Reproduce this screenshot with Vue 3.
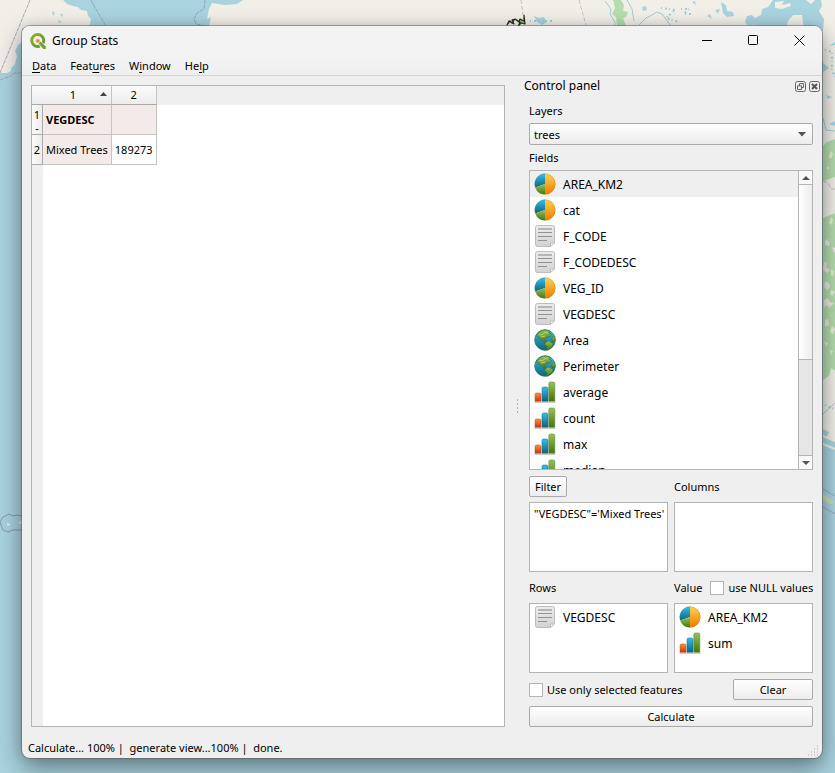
<script setup>
import { ref } from 'vue'

const menus = [
  ['', 'D', 'ata'],
  ['Feat', 'u', 'res'],
  ['W', 'i', 'ndow'],
  ['He', 'l', 'p'],
]

const fields = [
  { name: 'AREA_KM2', icon: 'pie' },
  { name: 'cat', icon: 'pie' },
  { name: 'F_CODE', icon: 'page' },
  { name: 'F_CODEDESC', icon: 'page' },
  { name: 'VEG_ID', icon: 'pie' },
  { name: 'VEGDESC', icon: 'page' },
  { name: 'Area', icon: 'globe' },
  { name: 'Perimeter', icon: 'globe' },
  { name: 'average', icon: 'bars' },
  { name: 'count', icon: 'bars' },
  { name: 'max', icon: 'bars' },
  { name: 'median', icon: 'bars' },
]
const rows = [{ name: 'VEGDESC', icon: 'page' }]
const values = [
  { name: 'AREA_KM2', icon: 'pie' },
  { name: 'sum', icon: 'bars' },
]

const current = ref(0)
const layer = ref('trees')
const filter = ref('"VEGDESC"=\'Mixed Trees\'')
const useNull = ref(false)
const onlySelected = ref(false)
</script>

<template>
  <div class="desktop">
    <svg class="map" viewBox="0 0 835 773" preserveAspectRatio="none" aria-hidden="true">
      <rect width="835" height="773" fill="#a9d3df" />
      <path fill="#f2efe9" d="M0 0H51l4 4 -2 8 3 5-1 7 4 4H22V42l-4 3-3 6 2 5-2 8-4 4 0 3-4 2-7 0Z" />
      <path fill="#f2efe9" d="M50 0H63l4 4 6 2 5 1 3 3 6 1 1 5 3 3-1 5-4 4H50Z" />
      <path fill="#f2efe9" d="M212 3l13 2 12-1 6-4H835V455l-12-8V60H205l4-34 2-9-4 2 2-10Z" />
      <path fill="#a9d3df" d="M773 0l-5 7-6 2-1 6-6 3-3-3-5 1-2 6 3 4 7-1 11 5 4-4 7 4h9l2-9 5-6 9 0 2 14 19 2 1-12-5-8 3-5-1-6h-6l-4 4-5-4Z" />
      <path fill="#f2efe9" d="M775 2l9-1-2 4 8-2 1 3-9 3-7-1Z" />
      <path fill="#a9d3df" d="M721 2l5 3 1 6 6 1 1 4-7 1-4-4ZM715 10l5-1-2 5ZM707 16l3-2 2 5ZM692 2l3-1 1 4ZM642 7l4-1 1 4-4 1ZM534 16l5 2 5-1 3 5-5 3-5-3ZM823 63l6 5-6 4ZM829 46l6-4v3ZM826 95l6 2-4 2ZM829 124l6-3v5Z" />
      <path fill="#b5dcae" d="M613 0h8l3 5-1 6 5 1-2 5-3 1 3 8-9 0-1-9-4-3 3-6Z" />
      <path fill="none" stroke="#9dcddd" stroke-width="1" d="M605 1l6 8-1 5 5 8 0 4M627 0l5 9 2 12M639 25l7-7 6-3 5-3 5 2 6 8 3 4M823 118l3 12 9 1M823 414l12-11" />
      <path fill="none" stroke="#9dcddd" stroke-width="2" stroke-dasharray="1 3 2 2" d="M530 21h24M661 8l14 2-9 8 13 4M681 9h8l-5 5h9M825 50l7 2 0 18 3 7M825 405l9 4" />
      <path fill="#b5dcae" d="M823 146l4-4 8-3v38l-12 4ZM823 218l12-5V371l-4-3-2 8-6 4Z" />
      <path fill="#ece9df" d="M831 151l2 3-2 5-2-2 1-4ZM826 168l3-2 0 4ZM831 217l2 3-1 5-3-2ZM825 241l2-2 3 4-1 3-4-1ZM832 247l3 1v5l-2-2ZM824 262l3 1-1 4 4 3-3 3-4-3ZM831 269l3 2-1 5-2-1ZM825 281l4 2 1 4-3 3-3-3ZM831 290l4 2-3 4-2-2ZM824 300l4-2 2 4 4 1-5 5-2-3-3 2ZM825 320l3-1 1 6-4 2ZM832 326l3 3-2 5-3-2ZM824 341l4 2-2 4ZM830 350l3 1-2 4Z" />
      <path fill="#a9d3df" d="M823 429l6 3-2 5 8 4v20l-12-4Z" />
      <path fill="none" stroke="#f2efe9" stroke-width="2" d="M823 436l12 5M823 444l12 5" />
      <path fill="#c7dfb7" d="M823 494l5 3 7 6-5 1-7-4Z" />
      <path fill="none" stroke="#94a6bd" d="M823 489l12 7M823 507l12 7" />
      <path fill="none" stroke="#b3a3b2" stroke-dasharray="4 1" d="M30 0L0 73M0 80l11-4 3-3 8 0" />
      <path fill="none" stroke="#8fa7bf" stroke-dasharray="4 1" d="M91 0l7 13 8 13M205 0l-1 9-7 4-3 6 2 5 9 2" />
      <path fill="none" stroke="#c6bcc2" stroke-dasharray="4 2" d="M521 0l2 15M579 0l7 25M823 181l5 2 3 6 4 0" />
      <path fill="#a9d3df" d="M52 11l3 2-2 3ZM58 20l4 2-3 1ZM14 68l4-8 4-1v7ZM60 14l3 0-1 3Z" />
      <path fill="#7fc45a" stroke="#292e25" stroke-width="1.2" stroke-linejoin="round" d="M507 25l3-4 2 2 3-4 4 3 1-3 4 2 0-6 1 9-4-1-3 4 2-5-5-3-3 1 2 4-5-3Z" />
      <path fill="none" stroke="#8b95ae" d="M22 516l-5-1-4 1-4-2-6 3-3 5 3 8 5 2 5-2 9 0" />
      <path fill="#f2efe9" d="M7 523l3 1-1 2-2-1ZM18 523l4-2v3Z" />
    </svg>

    <svg class="defs" aria-hidden="true">
      <defs>
        <linearGradient id="orange" x2="0" y2="1"><stop stop-color="#fbd449" /><stop offset="1" stop-color="#f57900" /></linearGradient>
        <linearGradient id="blue" x2="0" y2="1"><stop stop-color="#2fc3f2" /><stop offset="1" stop-color="#14607d" /></linearGradient>
        <linearGradient id="green" x2="0" y2="1"><stop stop-color="#96c35a" /><stop offset="1" stop-color="#44750c" /></linearGradient>
        <linearGradient id="red" x2="0" y2="1"><stop stop-color="#f19a35" /><stop offset="1" stop-color="#cf3210" /></linearGradient>
        <linearGradient id="paper" x2="0" y2="1"><stop stop-color="#ececec" /><stop offset="1" stop-color="#d2d2d2" /></linearGradient>
        <linearGradient id="logo" x2="1" y2="1"><stop stop-color="#93b023" /><stop offset="1" stop-color="#589632" /></linearGradient>
      </defs>
      <symbol id="pie" viewBox="0 0 22 22">
        <path fill="url(#blue)" d="M11 .5V11L1.300 14.500A10.500 10.500 0 0 1 11 .5Z" />
        <path fill="url(#green)" d="M11 11v10.500A10.500 10.500 0 0 1 1.300 14.500Z" />
        <path fill="url(#orange)" d="M11 .5a10.500 10.500 0 0 1 0 21Z" />
        <circle cx="11" cy="11" r="10.300" fill="none" stroke="#7b6b35" stroke-opacity=".35" stroke-width=".7" />
      </symbol>
      <symbol id="page" viewBox="1 1 22 22">
        <path fill="url(#paper)" stroke="#bdbdbd" d="M4.500 1.500h15q2 0 2 2v15l-4 4h-13q-2 0-2-2v-17q0-2 2-2Z" />
        <path fill="#fafafa" stroke="#bdbdbd" d="M17.500 22.500v-3.500h4Z" />
        <path stroke="#b5b5b5" stroke-width="2" d="M5 5h14" />
        <path stroke="#929292" d="M5 8.500h14M5 12.500h14M5 16.500h9" />
      </symbol>
      <symbol id="globe" viewBox="0 0 22 22">
        <circle cx="11" cy="11" r="10.300" fill="url(#blue)" stroke="#31706e" stroke-width=".8" />
        <path fill="url(#green)" stroke="#356b24" stroke-width=".5" d="M2.500 6.500Q5.500 1.500 11 1l5 1-1 2 2.500 1.500-1.500 2.500-2-1 0 1.500-3 1-1 1.500 1.500.5 1 1.500 1.500 .5-1 1-3-1-2-2.500-3-1.500-1-2-1 0Z" />
        <path fill="url(#green)" stroke="#356b24" stroke-width=".5" d="M11.500 13.500l3-1.500 4.500 2.500-1 3.500-3 2-1.500 1.300-1-.3.5-3.500-2-2Z" />
        <path fill="url(#green)" stroke="#356b24" stroke-width=".5" d="M20.800 7.500l-2 .5-1.500 3 1.500 2 2.300-.8Z" />
        <path fill="none" stroke="#b5d57a" stroke-width="1" d="M5 5.500l3 .5 3-2.500 3 .5M7 8l4-1" />
      </symbol>
      <symbol id="bars" viewBox="0 0 22 22">
        <path stroke="#c9c9c9" stroke-width="1.500" d="M.5 21.200h21" />
        <path fill="url(#red)" stroke="#b8421b" stroke-width=".5" d="M1 20.200v-6.700q0-1.500 1.500-1.500h3q1.500 0 1.500 1.500v6.700Z" />
        <path fill="url(#blue)" stroke="#17637e" stroke-width=".5" d="M8 20.200V7.500Q8 6 9.500 6h3Q14 6 14 7.500v12.700Z" />
        <path fill="url(#green)" stroke="#557c28" stroke-width=".5" d="M14.800 20.200V2.500Q14.800 1 16.300 1h3q1.500 0 1.500 1.500v17.700Z" />
      </symbol>
    </svg>

    <main class="window">
      <header class="titlebar">
        <svg class="logo" viewBox="0 0 16 16" aria-hidden="true">
          <circle cx="7.700" cy="7.500" r="6" fill="none" stroke="url(#logo)" stroke-width="3" />
          <path fill="#f3f3f3" d="M8 9.500l2-2 6 5V16h-5Z" />
          <path fill="#6fa52c" d="M8.600 10.500l2-2 5.200 5V16h-2.500Z" />
          <circle cx="7.700" cy="7.700" r="2.300" fill="#f6b26d" />
          <circle cx="8" cy="8" r="1.300" fill="#ef7b42" />
        </svg>
        <h1>Group Stats</h1>
        <div class="controls">
          <button aria-label="Minimize"><svg viewBox="0 0 11 11"><path d="M0 5.500h10" /></svg></button>
          <button aria-label="Maximize"><svg viewBox="0 0 11 11"><rect x=".5" y=".5" width="9" height="9" rx="1" /></svg></button>
          <button aria-label="Close"><svg viewBox="0 0 11 11"><path d="M.5 .5l10 10M10.500 .5l-10 10" /></svg></button>
        </div>
      </header>
      <nav class="menubar">
        <button v-for="m in menus" :key="m.join('')">{{ m[0] }}<u>{{ m[1] }}</u>{{ m[2] }}</button>
      </nav>

      <div class="content">
        <section class="results">
          <table>
            <thead>
              <tr>
                <td class="corner"></td>
                <th class="sorted"><span>1</span><svg viewBox="0 0 7 4" aria-hidden="true"><path d="M0 4L3.500 0 7 4Z" /></svg></th>
                <th>2</th>
              </tr>
            </thead>
            <tbody>
              <tr>
                <th class="index two-line">1<br>-</th>
                <td class="label title">VEGDESC</td>
                <td class="label"></td>
              </tr>
              <tr>
                <th class="index">2</th>
                <td class="label">Mixed Trees</td>
                <td>189273</td>
              </tr>
            </tbody>
          </table>
        </section>

        <div class="splitter"><i></i></div>

        <aside class="dock">
          <header class="dock-title">
            <h2>Control panel</h2>
            <button aria-label="Float"><svg viewBox="0 0 11 11"><rect x=".5" y=".5" width="10" height="10" rx="2" /><path d="M4.500 5V2.500h4v4H7M2.500 4.800h4v3.700h-4Z" /></svg></button>
            <button aria-label="Close panel"><svg viewBox="0 0 11 11"><rect x=".5" y=".5" width="10" height="10" rx="2" /><path class="thick" d="M3 3l5 5M8 3L3 8" /></svg></button>
          </header>
          <div class="panel">
            <label for="layer">Layers</label>
            <div class="combo">
              <select id="layer" v-model="layer"><option>trees</option></select>
              <svg viewBox="0 0 8 5" aria-hidden="true"><path d="M0 0h8L4 4.500Z" /></svg>
            </div>
            <div class="caption">Fields</div>
            <div class="frame fields">
              <ul>
                <li v-for="(f, i) in fields" :key="f.name" :class="{ current: i === current }" @click="current = i">
                  <svg class="icon"><use :href="'#' + f.icon" /></svg><span>{{ f.name }}</span>
                </li>
              </ul>
              <div class="scrollbar">
                <button aria-label="Scroll up"><svg viewBox="0 0 8 4"><path d="M0 4L4 0l4 4Z" /></svg></button>
                <div class="thumb"></div>
                <div class="track"></div>
                <button aria-label="Scroll down"><svg viewBox="0 0 8 4"><path d="M0 0h8L4 4Z" /></svg></button>
              </div>
            </div>

            <div class="pair heads">
              <div><button class="push">Filter</button></div>
              <div class="caption">Columns</div>
            </div>
            <div class="pair">
              <textarea v-model="filter" class="frame box" aria-label="Filter expression" spellcheck="false"></textarea>
              <ul class="frame box"></ul>
            </div>
            <div class="pair captions">
              <div class="caption">Rows</div>
              <div class="value-head">
                <span>Value</span>
                <label><input v-model="useNull" type="checkbox">use NULL values</label>
              </div>
            </div>
            <div class="pair">
              <ul class="frame box">
                <li v-for="r in rows" :key="r.name"><svg class="icon"><use :href="'#' + r.icon" /></svg><span>{{ r.name }}</span></li>
              </ul>
              <ul class="frame box">
                <li v-for="v in values" :key="v.name"><svg class="icon"><use :href="'#' + v.icon" /></svg><span>{{ v.name }}</span></li>
              </ul>
            </div>
            <div class="options">
              <label><input v-model="onlySelected" type="checkbox">Use only selected features</label>
              <button class="push clear">Clear</button>
            </div>
            <button class="push">Calculate</button>
          </div>
        </aside>
      </div>

      <footer class="status">
        <span>Calculate... 100% |&nbsp; generate view...100% |&nbsp; done.</span>
        <svg class="grip" viewBox="0 0 12 12" aria-hidden="true">
          <path d="M9 1h1M6 4h1M9 4h1M3 7h1M6 7h1M9 7h1M0 10h1M3 10h1M6 10h1M9 10h1" />
        </svg>
      </footer>
    </main>
  </div>
</template>

<style>
body { margin: 0; }
</style>

<style scoped>
* { box-sizing: border-box; }
.desktop {
  position: relative;
  display: flex;
  height: 100vh;
  min-height: 600px;
  padding: 26px 13px 15px 22px;
  overflow: hidden;
  font: 12px/16px "Noto Sans", "Liberation Sans", sans-serif;
  color: #000;
}
.map { position: absolute; inset: 0; width: 100%; height: 100%; }
.defs { position: absolute; width: 0; height: 0; }
.window {
  position: relative;
  flex: 1;
  min-width: 0;
  display: flex;
  flex-direction: column;
  background: #efefef;
  border-radius: 8px;
  box-shadow: 0 0 0 1px rgba(90, 90, 90, .5), 0 10px 26px rgba(0, 0, 0, .42), 0 0 12px rgba(0, 0, 0, .12);
}
h1, h2 { margin: 0; font-size: 12px; font-weight: 400; }
ul { margin: 0; padding: 0; list-style: none; }
button, select, textarea { font: inherit; color: inherit; }

.titlebar { display: flex; align-items: center; height: 29px; padding-left: 8px; background: #f3f3f3; border-radius: 8px 8px 0 0; gap: 6px; }
.logo { width: 16px; height: 16px; }
.controls { display: flex; margin-left: auto; }
.controls button { display: flex; justify-content: center; width: 46px; padding: 0; border: 0; background: none; }
.controls svg { width: 11px; height: 11px; fill: none; stroke: #000; }
.menubar { display: flex; gap: 14px; height: 21px; padding: 2px 10px 0; border-bottom: 1px solid #d5d5d5; background: linear-gradient(#f3f3f3, #efefef); font-size: 11px; }
.menubar button { padding: 0; border: 0; background: none; }
.menubar u { text-underline-offset: 2px; }

.content { flex: 1; min-height: 0; display: flex; }
.results {
  flex: 1;
  margin: 9px 0 0 9px;
  border: 1px solid #b4b4b4;
  background: linear-gradient(#efefef, #efefef) 0 0 / 100% 19px no-repeat, linear-gradient(#efefef, #efefef) 0 0 / 11px 100% no-repeat, #fff;
}
table { border-collapse: separate; border-spacing: 0; font-size: 11px; }
td, th { padding: 0 3px; border-right: 1px solid #c4c4c4; border-bottom: 1px solid #c4c4c4; height: 30px; font-weight: 400; white-space: nowrap; }
thead td, thead th { height: 19px; background: linear-gradient(#fbfbfb, #ececec); border-bottom-color: #aaa; }
thead .corner { padding: 0; border-right: 0; }
.sorted svg { float: right; width: 7px; height: 4px; margin-top: 5px; fill: #444; }
.sorted { padding-right: 4px; }
tbody .index { width: 11px; padding: 0; border-right-color: #aaa; border-bottom-color: #aaa; background: linear-gradient(90deg, #fbfbfb, #ececec); }
tbody .two-line { padding-top: 3px; line-height: 13px; }
.label { background: #f5eaea; }
.title { font-weight: 700; }

.splitter { display: flex; align-items: center; justify-content: center; width: 19px; padding: 10px 0 0 5px; }
.splitter i { width: 3px; height: 17px; background: radial-gradient(circle, #b0b0b0 1px, transparent 1px) 0 0 / 3px 4px; }
.dock { flex: 0 0 298px; display: flex; flex-direction: column; }
.dock-title { display: flex; align-items: center; height: 20px; gap: 3px; padding-right: 2px; }
.dock-title h2 { flex: 1; }
.dock-title button { display: flex; padding: 0; border: 0; background: none; }
.dock-title svg { width: 11px; height: 11px; fill: none; stroke: #666; }
.dock-title .thick { stroke-width: 2; stroke: #555; }
.panel { flex: 1; min-height: 0; display: flex; flex-direction: column; padding: 7px 9px 0 5px; font-size: 11px; }
.combo { position: relative; margin: 4px 0 5px; display: flex; }
select { flex: 1; height: 22px; padding: 2px 4px 0; appearance: none; border: 1px solid #aaa; border-radius: 2px; background: linear-gradient(#fff, #ececec); }
.combo svg { position: absolute; right: 7px; top: 9px; width: 8px; height: 5px; fill: #555; pointer-events: none; }
.frame { border: 1px solid #b4b4b4; background: #fff; font-size: 12px; }
.fields { flex: 1; min-height: 0; display: flex; margin: 4px 0 6px; }
.fields ul { flex: 1; overflow: hidden; }
li { display: flex; align-items: center; height: 26px; padding-left: 4px; gap: 7px; }
li span { padding-top: 2px; }
li.current { background: #efefef; }
.icon { width: 22px; height: 22px; flex: none; }
.scrollbar { display: flex; flex-direction: column; width: 14px; border-left: 1px solid #b4b4b4; background: #e6e6e6; }
.scrollbar button { display: flex; align-items: center; justify-content: center; height: 13px; padding: 0; border: 0; background: #f8f8f8; }
.scrollbar svg { width: 8px; height: 4px; fill: #555; }
.thumb { flex: 175; border: solid #b4b4b4; border-width: 1px 0; background: linear-gradient(90deg, #fff, #ededed); }
.track { flex: 95; border-bottom: 1px solid #b4b4b4; }
.pair { display: grid; grid-template-columns: minmax(0, 1fr) minmax(0, 1fr); column-gap: 6px; }
.heads { align-items: center; margin-bottom: 5px; }
.push { height: 21px; padding: 0 5px; border: 1px solid #aaa; border-radius: 2px; background: linear-gradient(#fff, #ececec); }
.box { height: 70px; min-width: 0; width: 100%; }
textarea { resize: none; padding: 3px 0 3px 4px; outline: 0; overflow: hidden; white-space: pre; }
textarea.box { font-size: 11px; }
.captions { align-items: center; height: 31px; }
.value-head { display: flex; gap: 8px; }
label { display: flex; align-items: center; gap: 4px; white-space: nowrap; }
input { appearance: none; flex: none; width: 14px; height: 14px; margin: 0; border: 1px solid #b4b4b4; background: #fff; }
input:checked { background: #666; }
.options { display: flex; align-items: center; justify-content: space-between; margin: 6px 0; }
.clear { width: 80px; }

.status { display: flex; align-items: center; height: 31px; padding: 10px 2px 0 6px; font-size: 11px; }
.grip { width: 12px; height: 12px; margin: 6px 0 0 auto; stroke: #aaa; }
</style>
